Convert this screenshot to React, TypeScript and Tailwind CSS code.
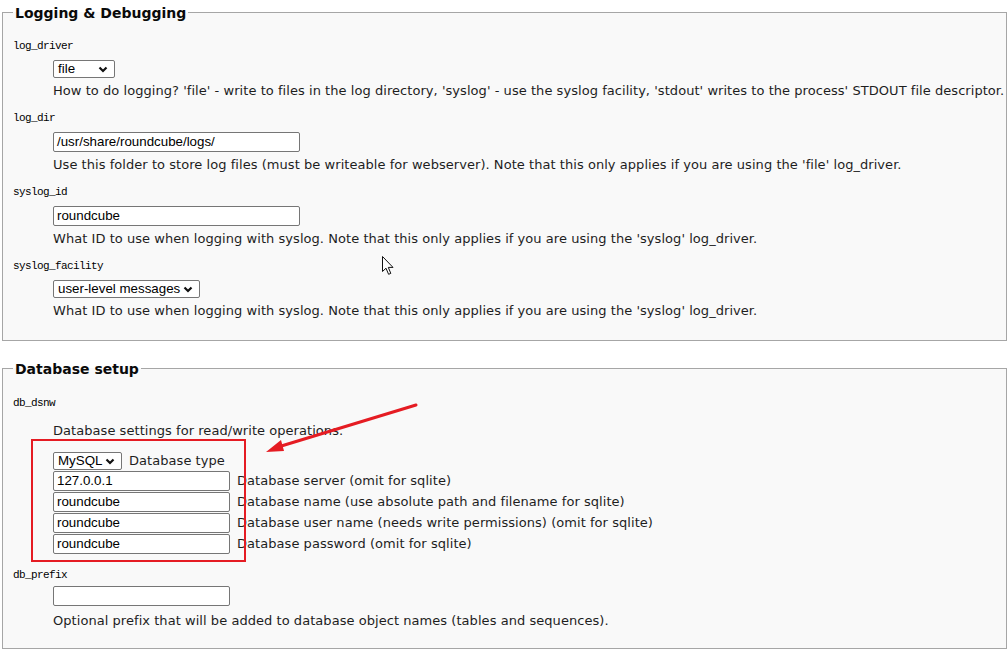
import type { ReactNode } from 'react'

const desc = "text-[13px] leading-4 tracking-[0.05px] text-[#1e1e1e] [font-family:'DejaVu_Sans',Verdana,sans-serif]"
const label = "h-4 text-[11px] leading-4 tracking-[-0.6px] text-black [font-family:'Liberation_Mono',monospace]"
const ctl = "[font-family:'Liberation_Sans',Arial,sans-serif] text-[13.33px] text-black"

function Chevron() {
  return (
    <svg width="10" height="7" viewBox="0 0 10 7" className="shrink-0">
      <path d="M1.5 1.5 L5 5 L8.5 1.5" fill="none" stroke="#111" strokeWidth="2.2" />
    </svg>
  )
}

function Select({ value, width }: { value: string; width: string }) {
  return (
    <div
      className={`flex h-[18px] items-center justify-between rounded-[2px] border border-[#767676] bg-white pl-[4px] pr-[6px] ${ctl} ${width}`}
    >
      <span className="leading-none">{value}</span>
      <Chevron />
    </div>
  )
}

function Input({ value = '', width }: { value?: string; width: string }) {
  return (
    <div
      className={`flex h-[20px] items-center rounded-[2px] border border-[#767676] bg-white pl-[3px] ${ctl} ${width}`}
    >
      {value}
    </div>
  )
}

function Field({ name, gap = 'mt-[11px]', children }: { name: string; gap?: string; children: ReactNode }) {
  return (
    <div className={gap}>
      <div className={`pl-[10px] ${label}`}>{name}</div>
      <div className="pl-[50px]">{children}</div>
    </div>
  )
}

function Box({ title, pad, children }: { title: string; pad: string; children: ReactNode }) {
  return (
    <fieldset className={`ml-[2px] w-[1005px] border border-[#a6a6a6] bg-[#f9f9f9] ${pad}`}>
      <legend className="ml-[10px] px-[2px] text-[14px] font-bold leading-6 text-[#0a0a0a] [font-family:'DejaVu_Sans',Verdana,sans-serif]">
        <span className="relative top-[1px]">{title}</span>
      </legend>
      {children}
    </fieldset>
  )
}

const dbRows = [
  ['127.0.0.1', 'Database server (omit for sqlite)'],
  ['roundcube', 'Database name (use absolute path and filename for sqlite)'],
  ['roundcube', 'Database user name (needs write permissions) (omit for sqlite)'],
  ['roundcube', 'Database password (omit for sqlite)'],
]

export default function App() {
  return (
    <div className="relative h-[665px] w-[1007px] overflow-hidden bg-white">
      <Box title="Logging & Debugging" pad="pt-[14px] pb-[21px]">
        <Field name="log_driver" gap="">
          <div className="mt-[6px]">
            <Select value="file" width="w-[62px]" />
          </div>
          <p className={`mt-[5px] whitespace-nowrap ${desc}`}>
            How to do logging? 'file' - write to files in the log directory, 'syslog' - use the syslog facility,
            'stdout' writes to the process' STDOUT file descriptor.
          </p>
        </Field>
        <Field name="log_dir">
          <div className="mt-[6px]">
            <Input value="/usr/share/roundcube/logs/" width="w-[247px]" />
          </div>
          <p className={`mt-[5px] ${desc}`}>
            Use this folder to store log files (must be writeable for webserver). Note that this only applies if you
            are using the 'file' log_driver.
          </p>
        </Field>
        <Field name="syslog_id">
          <div className="mt-[6px]">
            <Input value="roundcube" width="w-[247px]" />
          </div>
          <p className={`mt-[5px] ${desc}`}>
            What ID to use when logging with syslog. Note that this only applies if you are using the 'syslog'
            log_driver.
          </p>
        </Field>
        <Field name="syslog_facility">
          <div className="mt-[6px]">
            <Select value="user-level messages" width="w-[147px]" />
          </div>
          <p className={`mt-[5px] ${desc}`}>
            What ID to use when logging with syslog. Note that this only applies if you are using the 'syslog'
            log_driver.
          </p>
        </Field>
      </Box>

      <div className="h-[15px]" />

      <Box title="Database setup" pad="pt-[15px] pb-[19px]">
        <Field name="db_dsnw" gap="">
          <p className={`mt-[12px] ${desc}`}>Database settings for read/write operations.</p>
          <div className="mt-[13px] flex flex-col gap-[1px]">
            <div className="flex items-center gap-[7px]">
              <Select value="MySQL" width="w-[69px]" />
              <span className={desc}>Database type</span>
            </div>
            {dbRows.map(([v, d]) => (
              <div key={d} className="flex items-center gap-[7px]">
                <Input value={v} width="w-[177px]" />
                <span className={desc}>{d}</span>
              </div>
            ))}
          </div>
        </Field>
        <Field name="db_prefix" gap="mt-[13px]">
          <div className="mt-[3px]">
            <Input width="w-[177px]" />
          </div>
          <p className={`mt-[7px] ${desc}`}>
            Optional prefix that will be added to database object names (tables and sequences).
          </p>
        </Field>
      </Box>

      {/* annotation: red box + arrow */}
      <div className="absolute left-[31px] top-[439px] h-[123px] w-[215px] border-2 border-[#e51c23]" />
      <svg className="pointer-events-none absolute left-0 top-0" width="1007" height="665">
        <line x1="416" y1="405" x2="278" y2="447" stroke="#e51c23" strokeWidth="3" strokeLinecap="round" />
        <path d="M266 452 L281 440 L284 451 Z" fill="#e51c23" />
      </svg>

      {/* mouse cursor */}
      <svg className="absolute left-[382px] top-[256px]" width="13" height="20" viewBox="0 0 13 20">
        <path
          d="M0.5 0.5 L0.5 15.5 L4 12.2 L6.6 18.3 L8.8 17.4 L6.3 11.4 L11 11.4 Z"
          fill="white"
          stroke="#111"
          strokeWidth="1"
          strokeLinejoin="round"
        />
      </svg>
    </div>
  )
}
